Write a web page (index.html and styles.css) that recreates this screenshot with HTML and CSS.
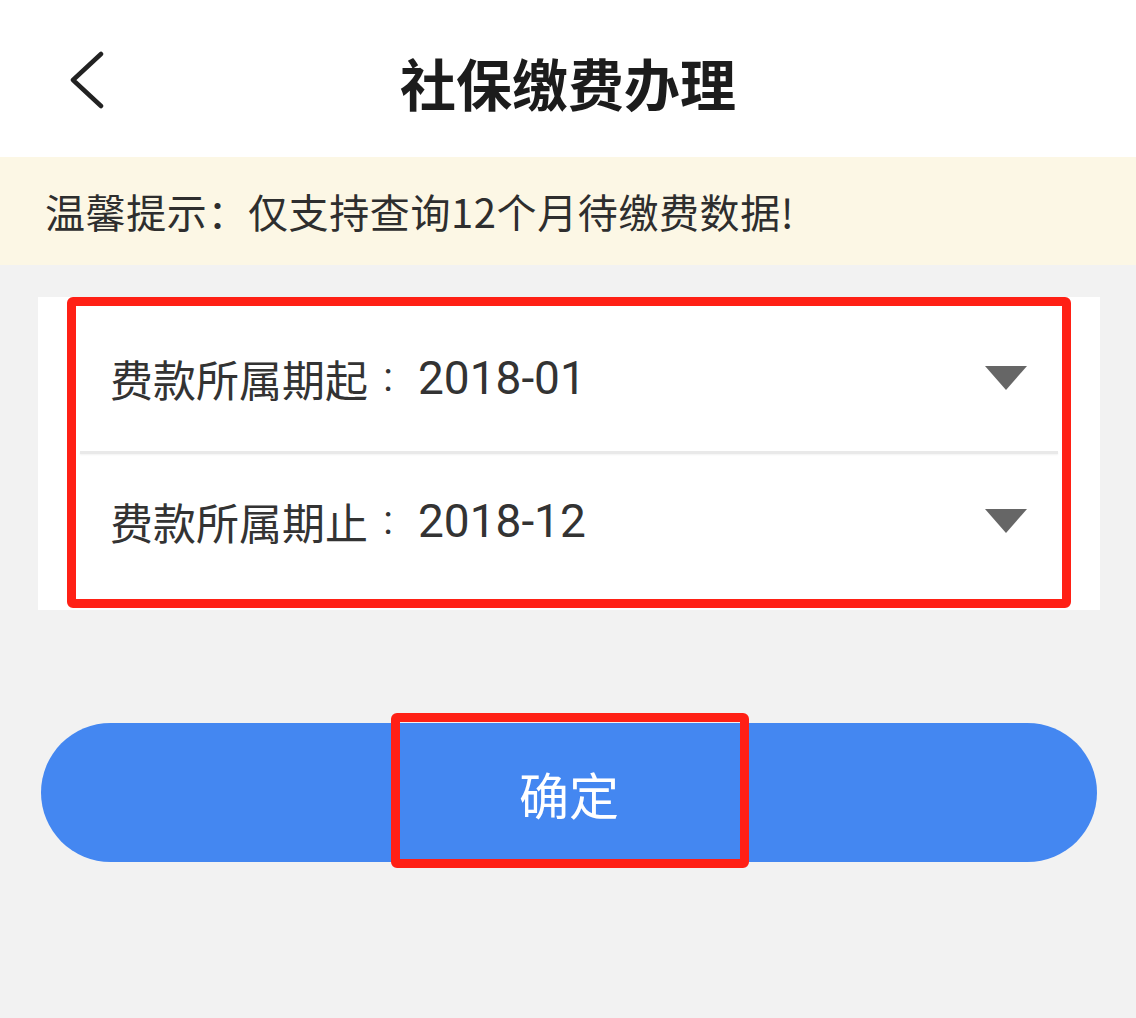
FILE: index.html
```html
<!DOCTYPE html>
<html lang="zh-CN">
<head>
<meta charset="utf-8">
<title>社保缴费办理</title>
<link rel="stylesheet" href="styles.css">
</head>
<body>
<header class="topbar">
  <a class="back" href="#" aria-label="返回">
    <svg width="40" height="60" viewBox="0 0 40 60"><path d="M31 3 L3 29 L31 55" fill="none" stroke="#222" stroke-width="4.5" stroke-linecap="round" stroke-linejoin="round"/></svg>
  </a>
  <h1 class="title">社保缴费办理</h1>
  <span class="spacer"></span>
</header>
<div class="notice">温馨提示：仅支持查询12个月待缴费数据!</div>
<main class="content">
  <section class="card">
    <span class="mark mark-card"></span>
    <div class="row row-first">
      <span class="label">费款所属期起<span class="colon">:</span><span class="val">2018-01</span></span>
      <span class="caret"></span>
    </div>
    <div class="divider"></div>
    <div class="row row-second">
      <span class="label">费款所属期止<span class="colon">:</span><span class="val">2018-12</span></span>
      <span class="caret"></span>
    </div>
  </section>
  <div class="btn-wrap">
    <button class="btn">确定</button>
    <span class="mark mark-btn"></span>
  </div>
</main>
</body>
</html>
```

FILE: styles.css
```css
* { box-sizing: border-box; }
html, body { margin: 0; padding: 0; }
body {
  width: 1136px;
  min-height: 1018px;
  background: #f2f2f2;
  font-family: "Noto Sans CJK SC", "Noto Sans", sans-serif;
  color: #333;
}
.topbar {
  height: 157px;
  background: #fff;
  display: grid;
  grid-template-columns: 1fr auto 1fr;
  align-items: center;
}
.back {
  justify-self: start;
  margin-left: 70px;
  margin-top: 4px;
  display: flex;
}
.title {
  margin: 0;
  font-size: 56px;
  font-weight: 700;
  color: #1c1c1c;
  line-height: 1;
  margin-top: 6px;
}
.notice {
  height: 108px;
  background: #fcf7e5;
  display: flex;
  align-items: center;
  padding-left: 45px;
  font-size: 40px;
  letter-spacing: 0.6px;
  color: #2e2e2e;
}
.content {
  padding-top: 32px;
}
.card {
  position: relative;
  margin-left: 38px;
  width: 1062px;
  height: 313px;
  background: #fff;
  padding: 8px 42px 0 42px;
}
.row {
  display: flex;
  align-items: center;
  justify-content: space-between;
  padding-left: 30px;
  padding-right: 31px;
}
.row-first { height: 146px; }
.row-second { height: 134px; }
.label {
  display: flex;
  align-items: center;
  font-size: 43px;
  color: #333;
  line-height: 1;
}
.colon {
  display: inline-block;
  width: 40px;
  text-align: center;
  font-family: Roboto, "Noto Sans", sans-serif;
  font-size: 40px;
}
.val {
  margin-left: 10px;
  font-family: Roboto, "Noto Sans", sans-serif;
  font-size: 46px;
}
.caret {
  width: 0;
  height: 0;
  border-left: 21px solid transparent;
  border-right: 21px solid transparent;
  border-top: 24px solid #666;
}
.divider {
  height: 3px;
  background: #e9e9e9;
  box-shadow: 0 1px 2px rgba(0,0,0,0.05);
}
.btn-wrap {
  position: relative;
  margin-top: 113px;
  margin-left: 41px;
  width: 1056px;
}
.btn {
  display: block;
  width: 100%;
  height: 139px;
  border: 0;
  border-radius: 70px;
  background: #4487f1;
  color: #fff;
  font-family: "Noto Sans CJK SC", "Noto Sans", sans-serif;
  font-size: 50px;
  padding: 0;
}
.mark {
  position: absolute;
  border: 9px solid #ff2015;
  border-radius: 6px;
  pointer-events: none;
}
.mark-card {
  left: 29px;
  top: 0;
  width: 1004px;
  height: 311px;
}
.mark-btn {
  left: 350px;
  top: -10px;
  width: 358px;
  height: 155px;
}
```
